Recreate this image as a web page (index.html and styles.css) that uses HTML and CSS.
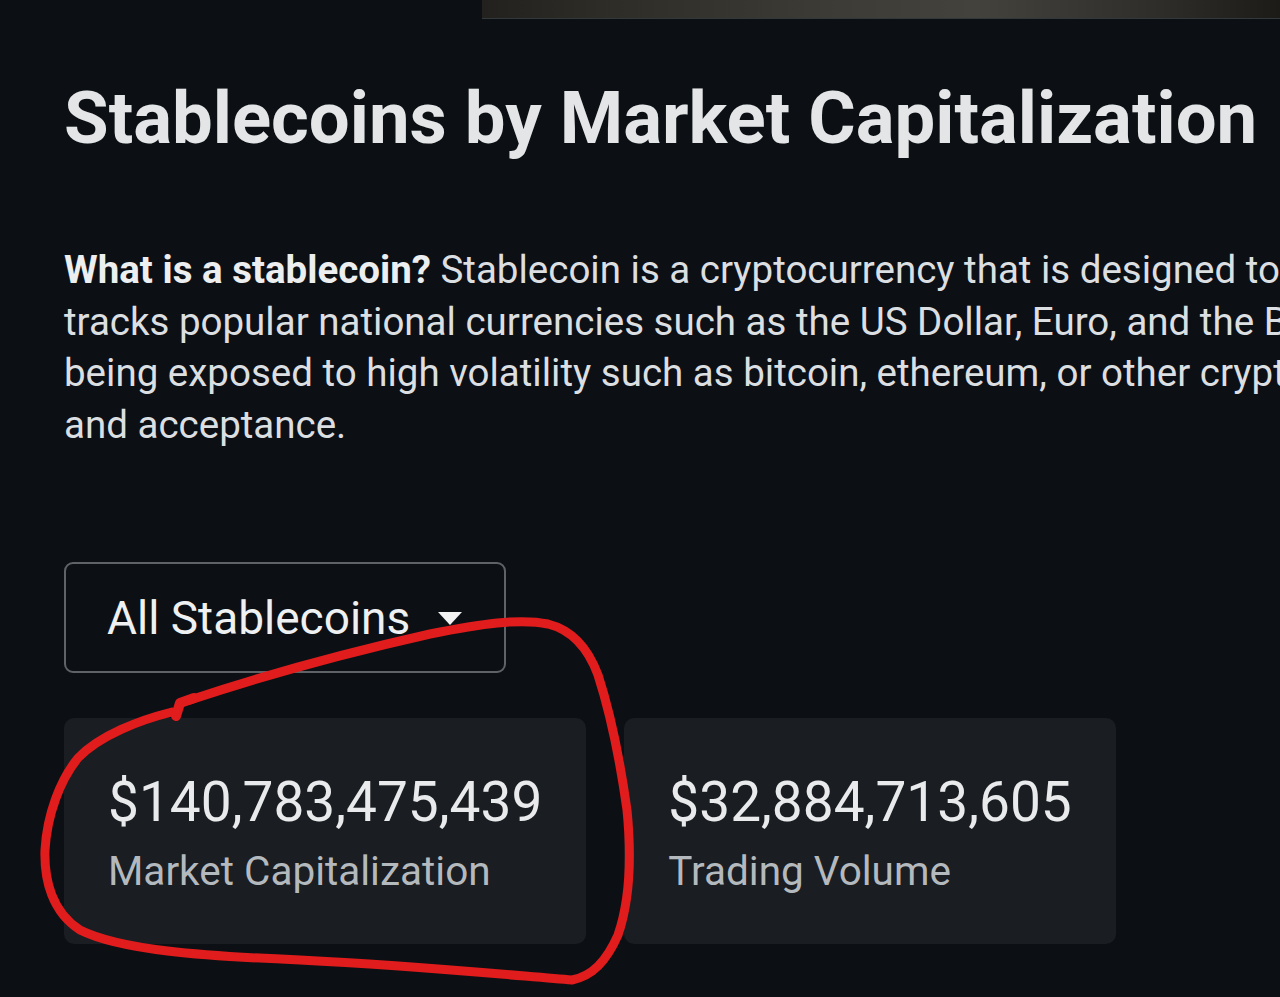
FILE: index.html
```html
<!DOCTYPE html>
<html lang="en">
<head>
<meta charset="utf-8">
<title>Stablecoins by Market Capitalization</title>
<link rel="stylesheet" href="styles.css">
</head>
<body>
<div class="page">
  <div class="banner"></div>
  <main class="content">
    <h1 class="title">Stablecoins by Market Capitalization</h1>
    <div class="intro">
      <span class="line"><strong>What is a stablecoin?</strong> Stablecoin is a cryptocurrency that is designed to</span>
      <span class="line">tracks popular national currencies such as the US Dollar, Euro, and the British</span>
      <span class="line">being exposed to high volatility such as bitcoin, ethereum, or other crypto</span>
      <span class="line">and acceptance.</span>
    </div>
    <button class="dropdown" type="button">All Stablecoins <span class="caret"></span></button>
    <div class="stats">
      <div class="stat">
        <div class="stat-value">$140,783,475,439</div>
        <div class="stat-label">Market Capitalization</div>
      </div>
      <div class="stat">
        <div class="stat-value">$32,884,713,605</div>
        <div class="stat-label">Trading Volume</div>
      </div>
    </div>
  </main>
  <svg class="annotation" width="1280" height="997" viewBox="0 0 1280 997" aria-hidden="true">
    <path d="M190 700 C 262 676 350 652 430 634 C 480 624 520 618 548 624 C 572 630 588 648 598 675 C 610 712 620 760 627 810 C 632 860 630 900 618 935 C 606 962 592 976 572 980 C 520 976 420 966 300 960 C 200 956 120 950 80 930 C 52 912 44 880 45 850 C 47 815 60 780 78 758 C 100 735 140 720 172 712" fill="none" stroke="#e11c1c" stroke-width="9" stroke-linecap="round" stroke-linejoin="round"/>
    <path d="M176 716 L 180 703 L 194 698" fill="none" stroke="#e11c1c" stroke-width="10" stroke-linecap="round" stroke-linejoin="round"/>
  </svg>
</div>
</body>
</html>
```

FILE: styles.css
```css
html, body {
  margin: 0;
  padding: 0;
  background: #0c1014;
}

.page {
  position: relative;
  width: 1280px;
  height: 997px;
  overflow: hidden;
  font-family: Roboto, "Liberation Sans", sans-serif;
  color: #e2e4e6;
}

.banner {
  margin-left: 482px;
  height: 18px;
  background: linear-gradient(90deg, #23211d 0%, #2e2c27 15%, #3d3c37 45%, #43423d 62%, #2f2d29 85%, #1c1b18 100%);
  box-shadow: 0 1px 0 #33383a;
}

.content {
  padding-left: 64px;
}

.title {
  margin: 60px 0 0;
  font-size: 72.5px;
  font-weight: 700;
  line-height: 82px;
  color: #e4e5e6;
  white-space: nowrap;
}

.intro {
  margin-top: 84px;
  font-size: 38.5px;
  line-height: 51.5px;
  color: #dcdfe2;
}

.intro .line {
  display: block;
  white-space: nowrap;
}

.intro strong {
  font-weight: 700;
  color: #eceef0;
}

.dropdown {
  display: flex;
  align-items: center;
  gap: 28px;
  margin-top: 112px;
  height: 111px;
  width: 442px;
  padding: 0 0 0 41px;
  box-sizing: border-box;
  background: transparent;
  border: 2px solid #5f6367;
  border-radius: 9px;
  font-family: Roboto, "Liberation Sans", sans-serif;
  font-size: 46px;
  color: #eef0f2;
}

.caret {
  width: 0;
  height: 0;
  border-left: 12px solid transparent;
  border-right: 12px solid transparent;
  border-top: 13px solid #f2f2f2;
  margin-top: 2px;
}

.stats {
  display: flex;
  gap: 38px;
  margin-top: 45px;
}

.stat {
  background: #1a1d21;
  border-radius: 10px;
  padding: 51px 44px 0;
  height: 226px;
  box-sizing: border-box;
}

.stat-value {
  font-size: 55px;
  line-height: 66px;
  color: #e8eaec;
}

.stat-label {
  margin-top: 12px;
  font-size: 40.5px;
  line-height: 48px;
  color: #b4b9be;
}

.annotation {
  position: absolute;
  left: 0;
  top: 0;
  pointer-events: none;
}
```
